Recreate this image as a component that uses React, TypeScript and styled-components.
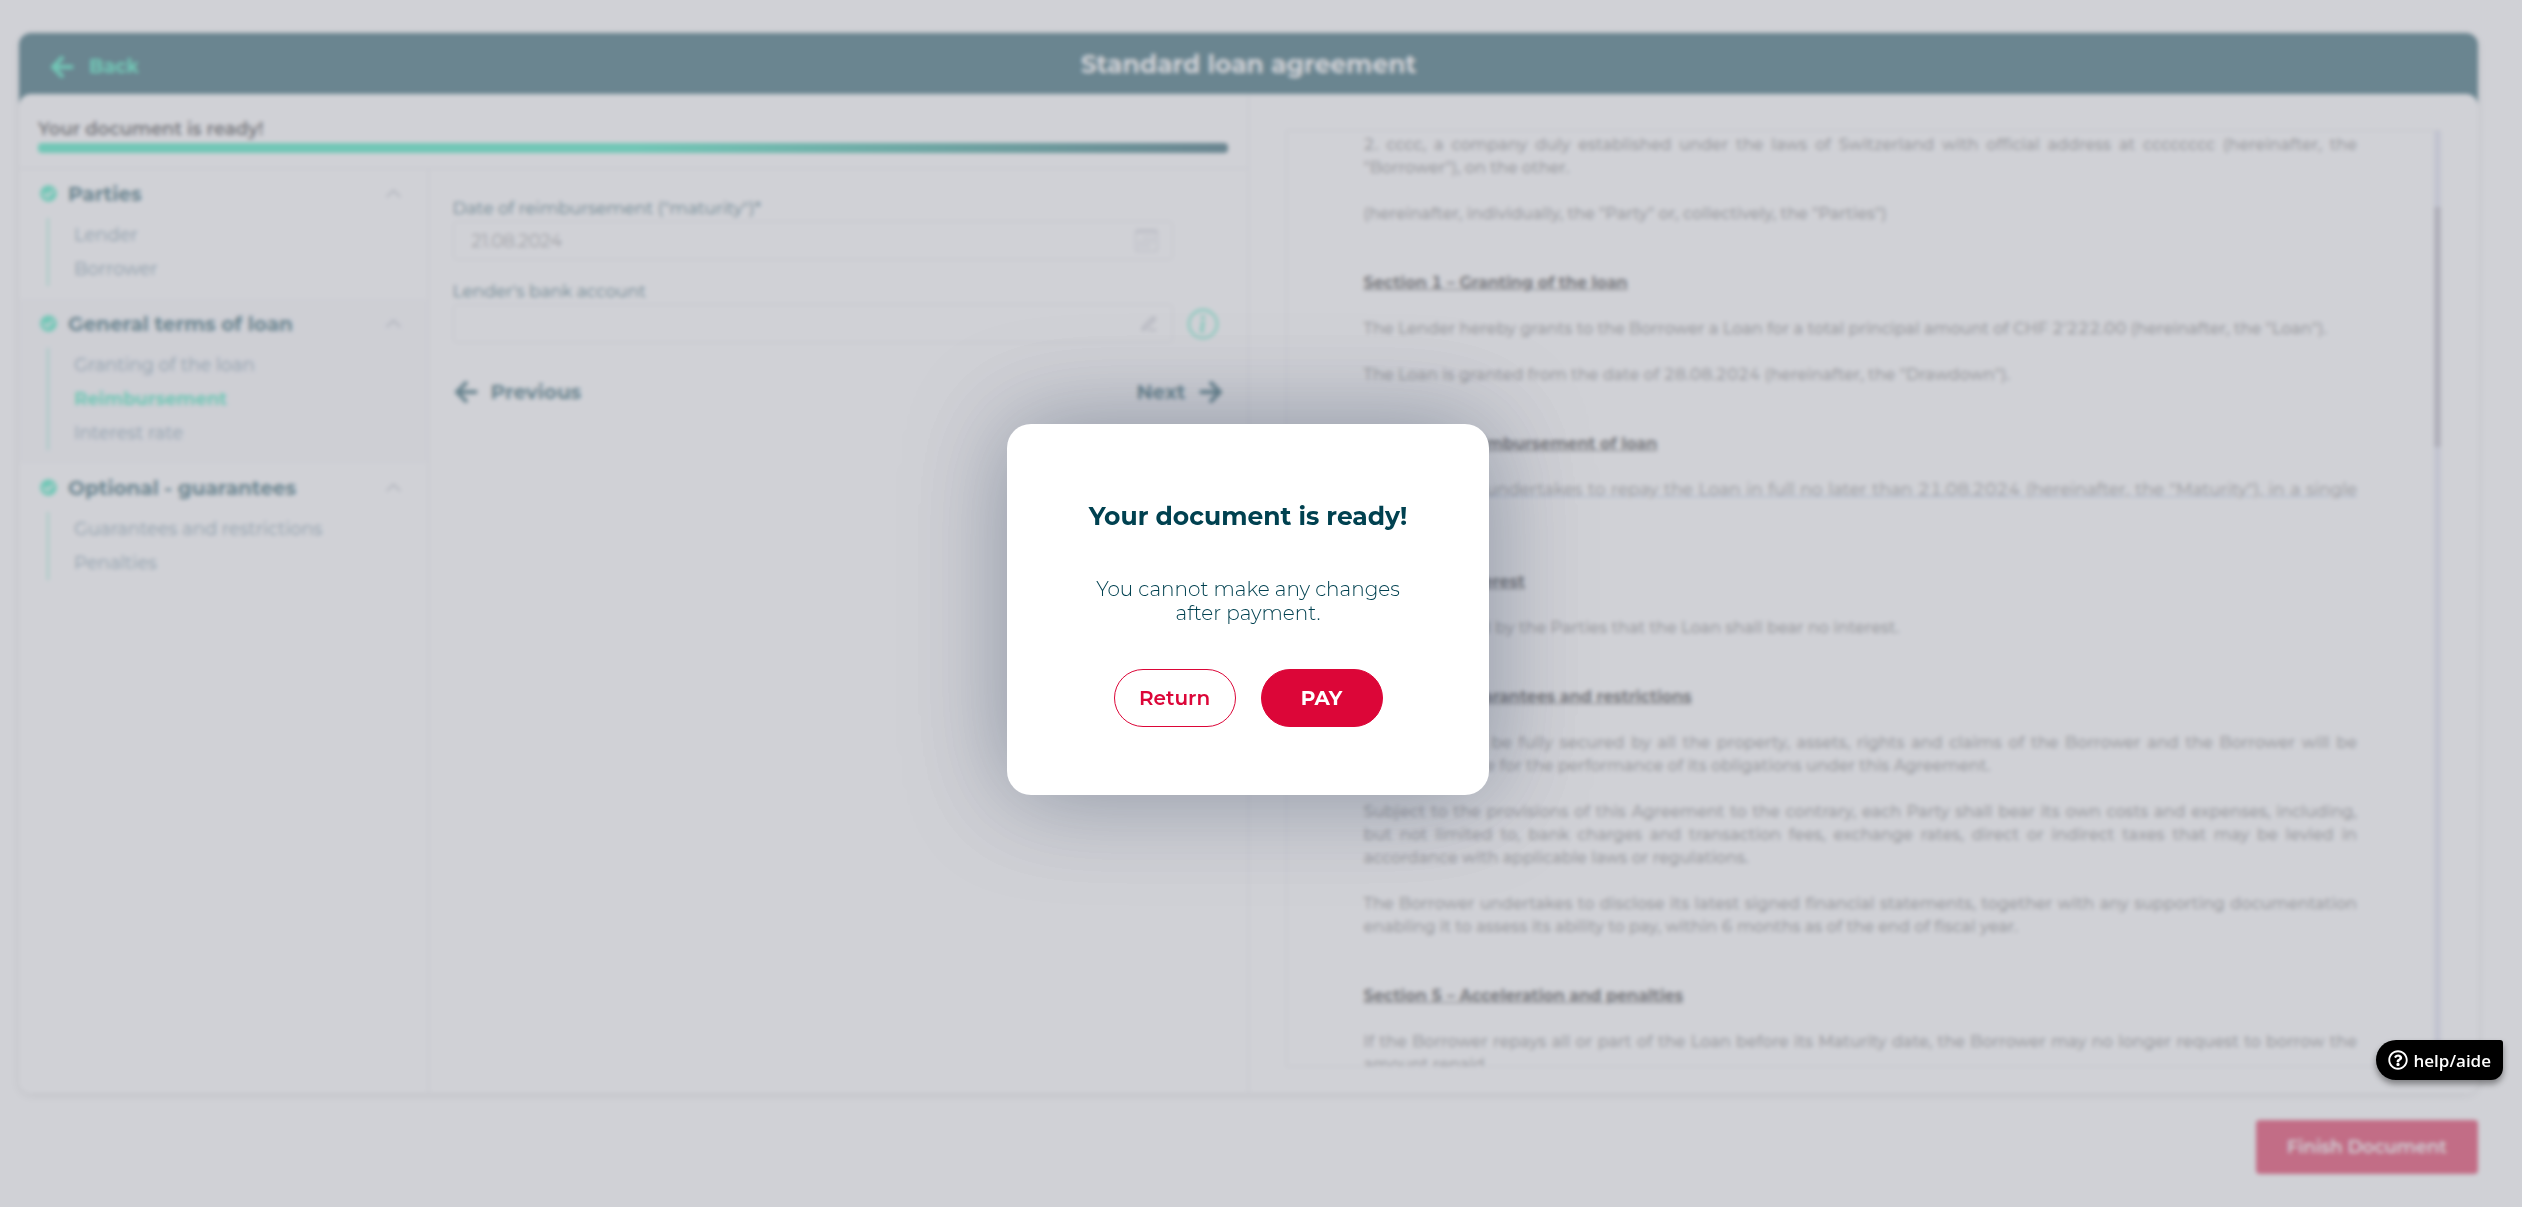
import React from "react";
import styled, { createGlobalStyle, css } from "styled-components";
import { FaArrowLeft, FaArrowRight, FaCheckCircle, FaRegQuestionCircle } from "react-icons/fa";
import { BsCalendar3, BsChevronUp, BsInfoCircle } from "react-icons/bs";
import { FiEdit3 } from "react-icons/fi";

const color = {
  teal: "#004150",
  green: "#14e6b0",
  red: "#dc0638",
  line: "#e2e2e7",
  muted: "#5a7f94",
};

const GlobalStyle = createGlobalStyle`
  *, *::before, *::after { box-sizing: border-box; }
  body {
    margin: 0;
    background: #fff;
    color: ${color.teal};
    font-family: Montserrat, Inter, "Liberation Sans", sans-serif;
    font-size: 16px;
  }
  button, input { font: inherit; color: inherit; }
  button { border: 0; background: none; padding: 0; cursor: pointer; }
  h1, h2, h3, p, ul { margin: 0; padding: 0; }
`;

const Page = styled.div`
  display: flex;
  flex-direction: column;
  height: 100vh;
  padding: 33px 44px 33px 19px;
`;

const Card = styled.main`
  flex: 1;
  min-height: 0;
  display: flex;
  flex-direction: column;
  border-radius: 12px;
  box-shadow: 0 2px 8px rgba(0, 0, 0, 0.16);
`;

const Header = styled.header`
  display: grid;
  grid-template-columns: 1fr auto 1fr;
  align-items: center;
  height: 73px;
  padding: 0 30px 12px;
  border-radius: 12px 12px 0 0;
  background: ${color.teal};
`;

const BackLink = styled.a`
  display: inline-flex;
  align-items: center;
  justify-self: start;
  gap: 14px;
  padding-top: 6px;
  color: ${color.green};
  font-size: 19px;
  font-weight: 700;
  text-decoration: none;
`;

const PageTitle = styled.h1`
  color: #fff;
  font-size: 25px;
  line-height: 32px;
  font-weight: 700;
`;

const Body = styled.div`
  flex: 1;
  min-height: 0;
  display: grid;
  grid-template-columns: 1fr 1fr;
  margin-top: -12px;
  border-radius: 12px;
  background: #fff;
`;

const Editor = styled.section`
  display: flex;
  flex-direction: column;
  border-right: 1px solid ${color.line};
`;

const Progress = styled.div`
  display: grid;
  gap: 2px;
  padding: 23px 20px 15px 19px;
  border-bottom: 1px solid ${color.line};
  color: #222;
  font-size: 18px;
  line-height: 24px;
  font-weight: 600;
`;

const ProgressBar = styled.div`
  height: 10px;
  border-radius: 4px;
  background: linear-gradient(90deg, ${color.green} 50%, ${color.teal});
`;

const Columns = styled.div`
  flex: 1;
  display: grid;
  grid-template-columns: 1fr 2fr;
`;

const Sidebar = styled.nav`
  border-right: 1px solid ${color.line};
`;

const Group = styled.section<{ $active?: boolean }>`
  padding-bottom: 13px;
  background: ${(p) => (p.$active ? "#f9f9fb" : "transparent")};
`;

const GroupHead = styled.button`
  display: flex;
  align-items: center;
  width: 100%;
  height: 49px;
  padding: 0 26px 0 21px;
  gap: 11px;
  font-size: 20px;
  font-weight: 700;
  text-align: left;
`;

const GroupName = styled.span`
  flex: 1;
`;

const CheckMark = styled(FaCheckCircle)`
  width: 17px;
  height: 17px;
  color: ${color.green};
`;

const Chevron = styled(BsChevronUp)`
  width: 17px;
  height: 17px;
  color: #76808f;
  stroke: currentColor;
`;

const Items = styled.ul`
  margin-left: 28px;
  border-left: 2px solid #8feed4;
  list-style: none;
`;

const ItemLink = styled.a<{ $current?: boolean }>`
  display: block;
  padding-left: 25px;
  color: ${(p) => (p.$current ? color.green : color.muted)};
  font-size: 18px;
  line-height: 34px;
  font-weight: ${(p) => (p.$current ? 700 : 400)};
  text-decoration: none;
`;

const Form = styled.form`
  display: flex;
  flex-direction: column;
  gap: 19px;
  padding: 27px 24px 0 24px;
`;

const Field = styled.div`
  display: grid;
  grid-template-columns: 1fr 51px;
`;

const Label = styled.label`
  grid-column: 1 / -1;
  font-size: 17px;
  line-height: 25px;
  font-weight: 400;
`;

const InputBox = styled.div`
  display: flex;
  align-items: center;
  height: 39px;
  padding: 0 14px 0 16px;
  border: 1px solid ${color.line};
  border-radius: 4px;
  color: #a9abb8;
`;

const Input = styled.input`
  flex: 1;
  min-width: 0;
  border: 0;
  outline: 0;
  background: none;
  color: #555;
  font-size: 18px;
  font-weight: 300;
`;

const CalendarIcon = styled(BsCalendar3)`
  width: 23px;
  height: 23px;
  color: #d4d5dc;
`;

const InfoButton = styled.button`
  display: flex;
  align-items: center;
  padding-left: 15px;
  color: ${color.green};
`;

const FormNav = styled.div`
  display: flex;
  justify-content: space-between;
  padding-top: 14px;
`;

const NavButton = styled.button`
  display: inline-flex;
  align-items: center;
  gap: 12px;
  height: 32px;
  font-size: 20px;
  font-weight: 700;
`;

const Preview = styled.section`
  min-height: 0;
  display: flex;
  padding: 36px 37px 26px;
`;

const Sheet = styled.div`
  flex: 1;
  display: flex;
  border: 1px solid ${color.line};
  border-right: 0;
  overflow: hidden;
`;

const Contract = styled.article`
  flex: 1;
  padding: 2px 77px 0;
  color: #7c7c7c;
  font-size: 16px;
  line-height: 23px;
  font-weight: 500;
  font-variant-numeric: tabular-nums;
  text-align: justify;
`;

const Clause = styled.p<{ $marked?: boolean }>`
  margin-bottom: 23px;
  ${(p) =>
    p.$marked &&
    css`
      color: #666;
      font-size: 17px;
      font-weight: 400;
      text-decoration: underline;
      text-decoration-color: #8fb0e0;
    `}
`;

const ClauseTitle = styled.h3`
  margin: 46px 0 23px;
  color: #222;
  font-size: 16px;
  line-height: 23px;
  font-weight: 700;
  text-decoration: underline;
`;

const Track = styled.div`
  width: 7px;
  padding-top: 76px;
  background: #dcdff0;
`;

const Thumb = styled.div`
  height: 240px;
  background: #b0aebc;
`;

const Footer = styled.footer`
  display: flex;
  justify-content: flex-end;
  padding-top: 27px;
`;

const FinishButton = styled.button`
  height: 54px;
  padding: 0 31px;
  border-radius: 4px;
  background: ${color.red};
  color: #fff;
  font-size: 18px;
  font-weight: 600;
`;

const Overlay = styled.div`
  position: fixed;
  inset: 0;
  display: flex;
  align-items: center;
  justify-content: center;
  padding: 12px 26px 0 0;
  background: rgba(177, 178, 187, 0.6);
  backdrop-filter: blur(2px);
`;

const Dialog = styled.div`
  width: 482px;
  padding: 76px 72px 68px;
  border-radius: 24px;
  background: #fff;
  box-shadow: 0 0 100px rgba(0, 24, 60, 0.34);
  text-align: center;
`;

const DialogTitle = styled.h2`
  font-size: 25px;
  line-height: 32px;
  font-weight: 700;
  white-space: nowrap;
`;

const DialogText = styled.p`
  margin: 45px 0 44px;
  font-size: 20px;
  line-height: 24px;
  font-weight: 300;
`;

const Actions = styled.div`
  display: flex;
  justify-content: center;
  gap: 25px;
`;

const PillButton = styled.button<{ $filled?: boolean }>`
  width: 122px;
  height: 58px;
  border: 1px solid ${color.red};
  border-radius: 29px;
  background: ${(p) => (p.$filled ? color.red : "#fff")};
  color: ${(p) => (p.$filled ? "#fff" : color.red)};
  font-size: 20px;
  font-weight: ${(p) => (p.$filled ? 700 : 600)};
`;

const HelpButton = styled.button`
  position: fixed;
  right: 19px;
  bottom: 127px;
  display: flex;
  align-items: center;
  gap: 5px;
  height: 40px;
  padding: 0 12px;
  border-radius: 20px 3px 12px 20px;
  background: #000;
  box-shadow: 0 4px 6px rgba(0, 0, 0, 0.4);
  color: #fff;
  font-family: "Open Sans", "Noto Sans", sans-serif;
  font-size: 17px;
  font-weight: 600;
`;

type GroupData = { name: string; items: string[]; active?: boolean };

const groups: GroupData[] = [
  { name: "Parties", items: ["Lender", "Borrower"] },
  {
    name: "General terms of loan",
    items: ["Granting of the loan", "Reimbursement", "Interest rate"],
    active: true,
  },
  { name: "Optional - guarantees", items: ["Guarantees and restrictions", "Penalties"] },
];

const currentItem = "Reimbursement";

export default function App() {
  return (
    <>
      <GlobalStyle />
      <Page>
        <Card>
          <Header>
            <BackLink href="#back">
              <FaArrowLeft size={26} />
              Back
            </BackLink>
            <PageTitle>Standard loan agreement</PageTitle>
          </Header>
          <Body>
            <Editor>
              <Progress>
                Your document is ready!
                <ProgressBar />
              </Progress>
              <Columns>
                <Sidebar>
                  {groups.map((group) => (
                    <Group key={group.name} $active={group.active}>
                      <GroupHead type="button">
                        <CheckMark />
                        <GroupName>{group.name}</GroupName>
                        <Chevron />
                      </GroupHead>
                      <Items>
                        {group.items.map((item) => (
                          <li key={item}>
                            <ItemLink href="#section" $current={item === currentItem}>
                              {item}
                            </ItemLink>
                          </li>
                        ))}
                      </Items>
                    </Group>
                  ))}
                </Sidebar>
                <Form>
                  <Field>
                    <Label htmlFor="maturity">Date of reimbursement ("maturity")*</Label>
                    <InputBox>
                      <Input id="maturity" defaultValue="21.08.2024" />
                      <CalendarIcon />
                    </InputBox>
                  </Field>
                  <Field>
                    <Label htmlFor="account">Lender's bank account</Label>
                    <InputBox>
                      <Input id="account" />
                      <FiEdit3 size={18} />
                    </InputBox>
                    <InfoButton type="button" aria-label="More information">
                      <BsInfoCircle size={30} />
                    </InfoButton>
                  </Field>
                  <FormNav>
                    <NavButton type="button">
                      <FaArrowLeft size={26} />
                      Previous
                    </NavButton>
                    <NavButton type="button">
                      Next
                      <FaArrowRight size={26} />
                    </NavButton>
                  </FormNav>
                </Form>
              </Columns>
            </Editor>
            <Preview>
              <Sheet>
                <Contract>
                  <Clause>
                    2. cccc, a company duly established under the laws of Switzerland with official
                    address at cccccccc (hereinafter, the "Borrower"), on the other.
                  </Clause>
                  <Clause>
                    (hereinafter, individually, the "Party" or, collectively, the "Parties")
                  </Clause>
                  <ClauseTitle>Section 1 – Granting of the loan</ClauseTitle>
                  <Clause>
                    The Lender hereby grants to the Borrower a Loan for a total principal amount of
                    CHF 2'222.00 (hereinafter, the "Loan").
                  </Clause>
                  <Clause>
                    The Loan is granted from the date of 28.08.2024 (hereinafter, the "Drawdown").
                  </Clause>
                  <ClauseTitle>Section 2 – Reimbursement of loan</ClauseTitle>
                  <Clause $marked>
                    The Borrower undertakes to repay the Loan in full no later than 21.08.2024
                    (hereinafter, the "Maturity"), in a single instalment.
                  </Clause>
                  <ClauseTitle>Section 3 – Interest</ClauseTitle>
                  <Clause>
                    It is understood by the Parties that the Loan shall bear no interest.
                  </Clause>
                  <ClauseTitle>Section 4 – Guarantees and restrictions</ClauseTitle>
                  <Clause>
                    The Loan shall be fully secured by all the property, assets, rights and claims of
                    the Borrower and the Borrower will be personally liable for the performance of
                    its obligations under this Agreement.
                  </Clause>
                  <Clause>
                    Subject to the provisions of this Agreement to the contrary, each Party shall
                    bear its own costs and expenses, including, but not limited to, bank charges and
                    transaction fees, exchange rates, direct or indirect taxes that may be levied in
                    accordance with applicable laws or regulations.
                  </Clause>
                  <Clause>
                    The Borrower undertakes to disclose its latest signed financial statements,
                    together with any supporting documentation enabling it to assess its ability to
                    pay, within 6 months as of the end of fiscal year.
                  </Clause>
                  <ClauseTitle>Section 5 – Acceleration and penalties</ClauseTitle>
                  <Clause>
                    If the Borrower repays all or part of the Loan before its Maturity date, the
                    Borrower may no longer request to borrow the amount repaid.
                  </Clause>
                </Contract>
                <Track>
                  <Thumb />
                </Track>
              </Sheet>
            </Preview>
          </Body>
        </Card>
        <Footer>
          <FinishButton type="button">Finish Document</FinishButton>
        </Footer>
      </Page>
      <Overlay>
        <Dialog role="dialog" aria-modal="true" aria-labelledby="dialog-title">
          <DialogTitle id="dialog-title">Your document is ready!</DialogTitle>
          <DialogText>You cannot make any changes after payment.</DialogText>
          <Actions>
            <PillButton type="button">Return</PillButton>
            <PillButton type="button" $filled>
              PAY
            </PillButton>
          </Actions>
        </Dialog>
      </Overlay>
      <HelpButton type="button">
        <FaRegQuestionCircle size={20} />
        help/aide
      </HelpButton>
    </>
  );
}
